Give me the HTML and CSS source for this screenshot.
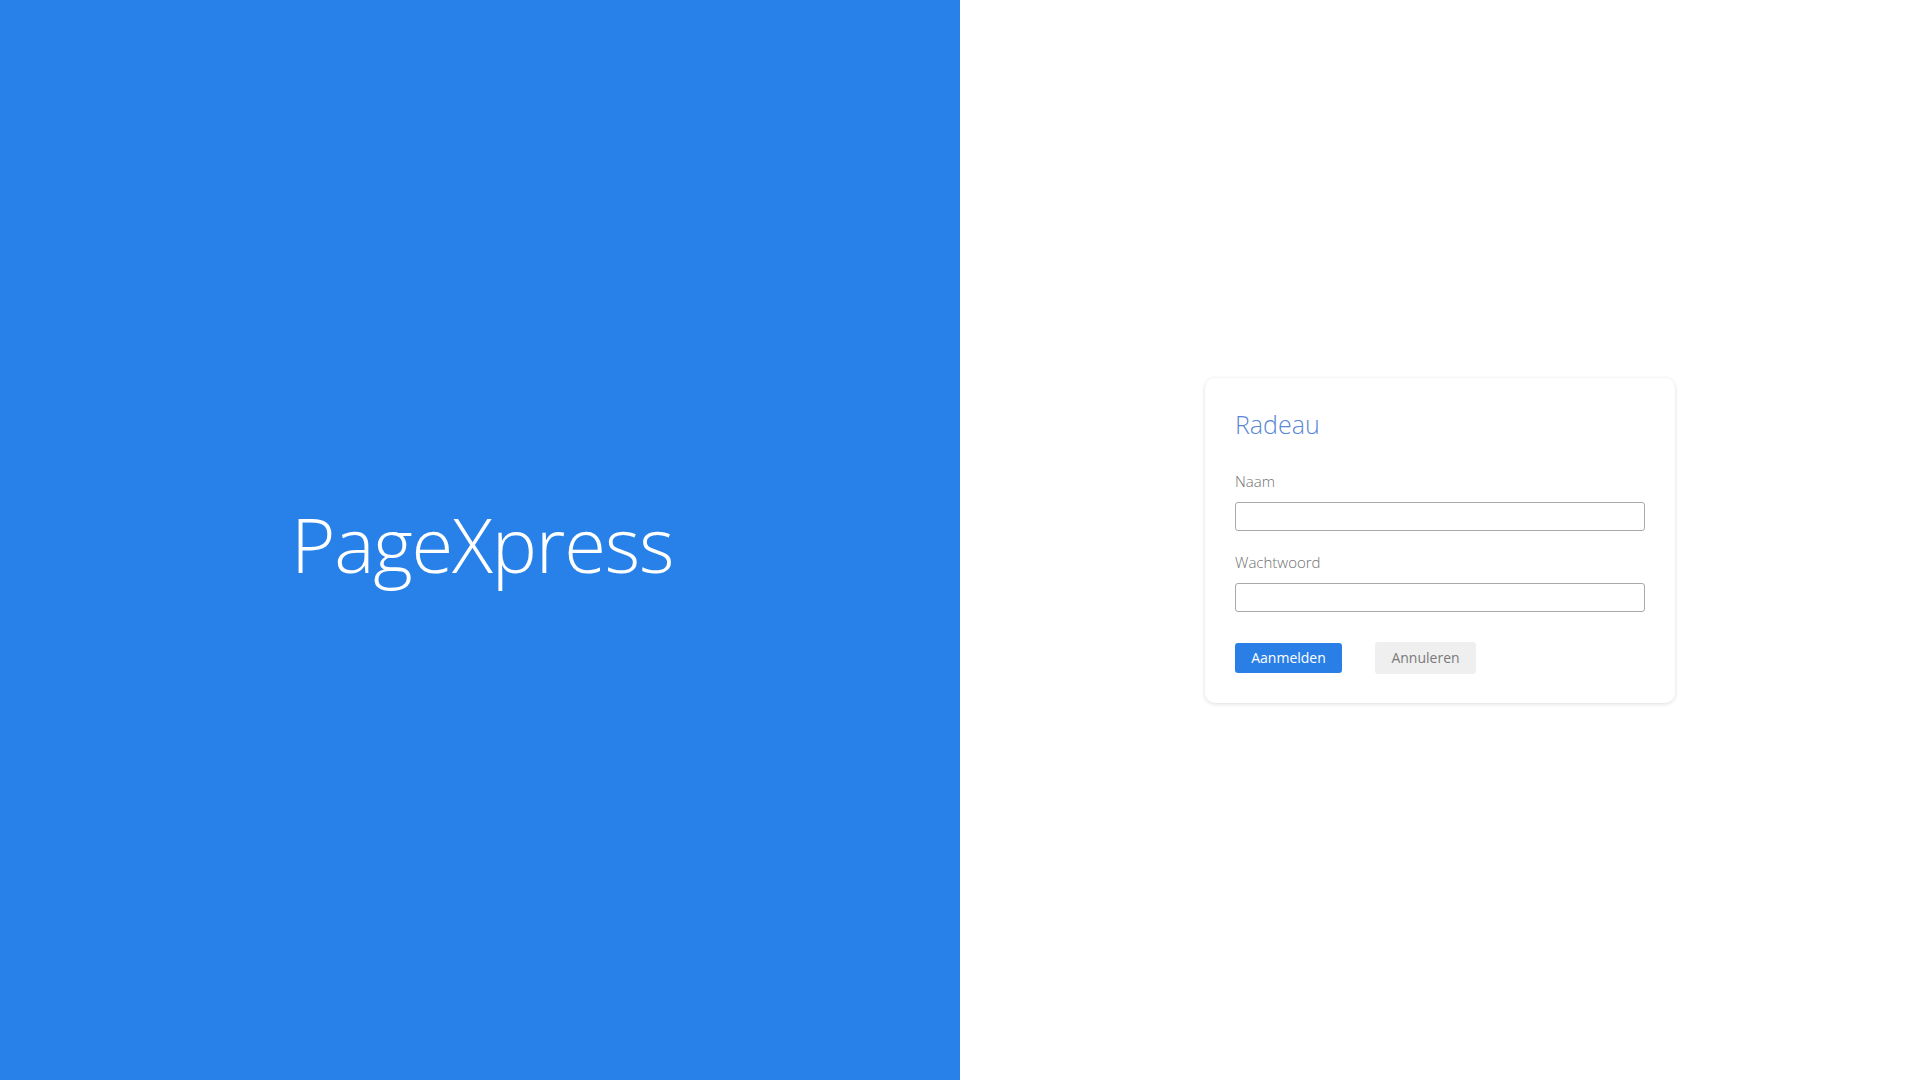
FILE: index.html
```html
<!DOCTYPE html>
<html lang="nl">
<head>
<meta charset="utf-8">
<title>PageXpress</title>
<link rel="stylesheet" href="styles.css">
</head>
<body>
<div class="page">
  <section class="brand">
    <h1 class="brand-name">PageXpress</h1>
  </section>
  <section class="login">
    <form class="card">
      <h2 class="card-title">Radeau</h2>
      <label class="field">
        <span class="field-label">Naam</span>
        <input class="field-input" type="text">
      </label>
      <label class="field">
        <span class="field-label">Wachtwoord</span>
        <input class="field-input" type="password">
      </label>
      <div class="actions">
        <button type="button" class="btn btn-primary">Aanmelden</button>
        <button type="button" class="btn btn-secondary">Annuleren</button>
      </div>
    </form>
  </section>
</div>
</body>
</html>
```
FILE: styles.css
```css
* { box-sizing: border-box; }
html, body { margin: 0; padding: 0; height: 100%; }
body {
  font-family: "Open Sans", "Noto Sans", sans-serif;
  background: #fff;
}
.page {
  display: flex;
  width: 1920px;
  height: 1080px;
}
.brand {
  width: 960px;
  background: #2781e9;
  display: flex;
  align-items: center;
  justify-content: center;
}
.brand-name {
  margin: 0;
  color: #fff;
  font-weight: 300;
  font-size: 76px;
  letter-spacing: -1.2px;
  line-height: 1;
  padding-left: 4px;
  padding-top: 7px;
}
.login {
  width: 960px;
  display: flex;
  align-items: center;
  justify-content: center;
}
.card {
  width: 470px;
  height: 325px;
  background: #fff;
  border-radius: 10px;
  box-shadow: 0 1px 4px rgba(0,0,0,0.14);
  padding: 30px 30px 0 30px;
  display: flex;
  flex-direction: column;
}
.card-title {
  margin: 0;
  font-weight: 300;
  font-size: 25px;
  color: #5a88d8;
  line-height: 32px;
  height: 32px;
}
.field {
  display: flex;
  flex-direction: column;
  margin-top: 31px;
}
.field + .field { margin-top: 21px; }
.field-label {
  font-size: 15px;
  font-weight: 300;
  color: #6f6f6f;
  line-height: 20px;
  margin-bottom: 11px;
}
.field-input {
  width: 410px;
  height: 29px;
  border: 1px solid #a9a9a9;
  border-radius: 3px;
  background: #fff;
  font: inherit;
  outline: none;
}
.actions {
  display: flex;
  gap: 33px;
  margin-top: 31px;
}
.btn {
  height: 30px;
  border: none;
  border-radius: 3px;
  font-family: inherit;
  font-size: 14px;
  font-weight: 400;
  padding: 0;
  cursor: pointer;
}
.btn-primary {
  width: 107px;
  background: #2a7fe6;
  color: #fff;
}
.btn-secondary {
  width: 101px;
  height: 32px;
  margin-top: -1px;
  background: #efefef;
  color: #7a7a7a;
}
```
